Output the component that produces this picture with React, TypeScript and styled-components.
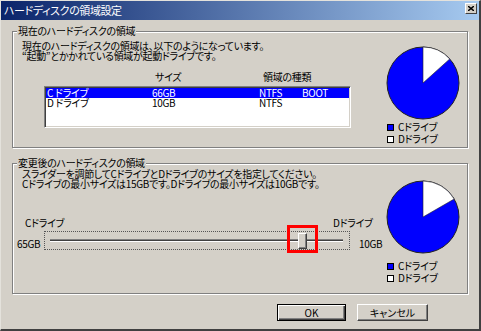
import { createGlobalStyle, styled } from 'styled-components';

const GlobalStyle = createGlobalStyle`
  html, body {
    margin: 0;
    padding: 0;
    background: #d4d0c8;
  }
  body {
    font-family: "Noto Sans CJK JP", "Noto Sans", sans-serif;
    font-size: 10px;
    font-feature-settings: "palt";
    letter-spacing: -0.3px;
    color: #000;
  }
`;

const Window = styled.div`
  width: 481px;
  height: 331px;
  box-sizing: border-box;
  background: #d4d0c8;
  border-left: 1px solid #e4e2dc;
  border-top: 1px solid #e4e2dc;
  border-right: 2px solid #404040;
  border-bottom: 2px solid #404040;
  display: flex;
  flex-direction: column;
`;

const TitleBar = styled.div`
  height: 19px;
  display: flex;
  justify-content: space-between;
  padding: 0 2px 0 3px;
  background: linear-gradient(to right, #0a246a, #a6caf0);
`;

const TitleText = styled.div`
  color: #fff;
  font-size: 11px;
  letter-spacing: -0.4px;
  line-height: 19px;
  white-space: nowrap;
`;

const CloseButton = styled.div`
  width: 12px;
  height: 11px;
  margin-top: 2px;
  box-sizing: border-box;
  background: #d4d0c8;
  border: 1px solid;
  border-color: #fff #404040 #404040 #fff;
  display: flex;
  align-items: center;
  justify-content: center;
`;

const Body = styled.div`
  flex: 1;
  padding: 11px 11px 0 11px;
  display: flex;
  flex-direction: column;
`;

const GroupBox = styled.div<{ $height: number; $gap: number }>`
  position: relative;
  box-sizing: border-box;
  height: ${(p) => p.$height}px;
  margin-top: ${(p) => p.$gap}px;
  border: 1px solid #808080;
  box-shadow: inset 1px 1px 0 #fff, 1px 1px 0 #fff;
  display: grid;
  grid-template-columns: 1fr 74px;
  padding: 0 7px 0 ${(p) => (p.$gap ? 4 : 9)}px;
`;

const GroupTitle = styled.div`
  position: absolute;
  top: -6px;
  left: 4px;
  padding: 0 1px;
  background: #d4d0c8;
  line-height: 10px;
  white-space: nowrap;
`;

const LeftColumn = styled.div`
  display: flex;
  flex-direction: column;
  min-width: 0;
`;

const RightColumn = styled.div<{ $top: number; $legendGap: number }>`
  display: flex;
  flex-direction: column;
  padding-top: ${(p) => p.$top}px;
  & > ul {
    margin-top: ${(p) => p.$legendGap}px;
  }
`;

const Message = styled.div<{ $top: number; $indent: number }>`
  margin-top: ${(p) => p.$top}px;
  margin-left: ${(p) => p.$indent}px;
  line-height: 10px;
  white-space: nowrap;
`;

const HeaderRow = styled.div`
  margin-top: 11px;
  display: grid;
  grid-template-columns: 133px 108px auto;
  line-height: 10px;
  white-space: nowrap;
`;

const ListBox = styled.div`
  margin: 4px 0 0 22px;
  width: 307px;
  height: 42px;
  box-sizing: border-box;
  background: #fff;
  border: 1px solid;
  border-color: #808080 #fff #fff #808080;
  box-shadow: inset 1px 1px 0 #404040, inset -1px -1px 0 #d4d0c8;
  padding: 1px;
`;

const ListRow = styled.div<{ $selected?: boolean }>`
  display: grid;
  grid-template-columns: 105px 107px 43px auto;
  height: 10px;
  line-height: 10px;
  padding-left: 1px;
  white-space: nowrap;
  background: ${(p) => (p.$selected ? '#0000ff' : 'transparent')};
  color: ${(p) => (p.$selected ? '#fff' : '#000')};
`;

const Legend = styled.ul`
  list-style: none;
  margin: 0;
  padding: 0 0 0 1px;
`;

const LegendItem = styled.li`
  display: flex;
  align-items: center;
  gap: 4px;
  line-height: 12px;
  white-space: nowrap;
`;

const Swatch = styled.span<{ $color: string }>`
  width: 7px;
  height: 7px;
  box-sizing: border-box;
  border: 1px solid #000;
  background: ${(p) => p.$color};
`;

const DriveLabels = styled.div`
  margin-top: 29px;
  padding-left: 8px;
  display: grid;
  grid-template-columns: 308px auto;
  line-height: 10px;
  white-space: nowrap;
`;

const SliderRow = styled.div`
  margin-top: 3px;
  display: flex;
  align-items: flex-end;
  white-space: nowrap;
`;

const SizeLabel = styled.span<{ $width?: number; $left?: number }>`
  width: ${(p) => (p.$width ? `${p.$width}px` : 'auto')};
  margin-left: ${(p) => p.$left ?? 0}px;
  margin-bottom: 1px;
  line-height: 10px;
`;

const Track = styled.div`
  position: relative;
  width: 306px;
  height: 19px;
  box-sizing: border-box;
  border: 1px dotted #555;
  display: flex;
  align-items: center;
  padding: 0 6px 0 5px;
`;

const Groove = styled.div`
  flex: 1;
  height: 1px;
  border-top: 1px solid #808080;
  border-bottom: 1px solid #fff;
  background: #404040;
`;

const Thumb = styled.div`
  position: absolute;
  top: 1px;
  width: 9px;
  height: 16px;
  box-sizing: border-box;
  background: #d4d0c8;
  border: 1px solid;
  border-color: #fff #404040 #404040 #fff;
  box-shadow: inset -1px -1px 0 #808080;
`;

const Highlight = styled.div`
  position: absolute;
  left: -12px;
  right: -12px;
  top: -9px;
  bottom: -5px;
  border: 3px solid #ff0000;
`;

const ButtonRow = styled.div`
  margin-top: 10px;
  padding-right: 40px;
  display: flex;
  justify-content: flex-end;
  gap: 11px;
`;

const Button = styled.button<{ $default?: boolean; $width: number }>`
  width: ${(p) => p.$width}px;
  height: 17px;
  padding: 0;
  font: inherit;
  font-size: 10px;
  line-height: 14px;
  color: #000;
  background: #d4d0c8;
  border: 1px solid;
  border-color: ${(p) => (p.$default ? '#000' : '#fff #404040 #404040 #fff')};
  box-shadow: ${(p) =>
    p.$default
      ? 'inset 1px 1px 0 #fff, inset -1px -1px 0 #404040, inset -2px -2px 0 #808080'
      : 'inset -1px -1px 0 #808080'};
`;

function Pie({ dAngle }: { dAngle: number }) {
  const c = 37;
  const r = 36;
  const a = (dAngle * Math.PI) / 180;
  const x = c + r * Math.sin(a);
  const y = c - r * Math.cos(a);
  return (
    <svg width="74" height="74" viewBox="0 0 74 74">
      <circle cx={c} cy={c} r={r} fill="#0000ff" stroke="#222" strokeWidth="1" />
      <path
        d={`M${c} ${c} L${c} ${c - r} A${r} ${r} 0 0 1 ${x.toFixed(2)} ${y.toFixed(2)} Z`}
        fill="#fff"
        stroke="#222"
        strokeWidth="0.6"
      />
    </svg>
  );
}

function DriveLegend() {
  return (
    <Legend>
      <LegendItem>
        <Swatch $color="#0000ff" />
        Cドライブ
      </LegendItem>
      <LegendItem>
        <Swatch $color="#fff" />
        Dドライブ
      </LegendItem>
    </Legend>
  );
}

const thumbFraction = 0.86;
const grooveLeft = 5;
const grooveWidth = 293;

export default function App() {
  return (
    <>
      <GlobalStyle />
      <Window>
        <TitleBar>
          <TitleText>ハードディスクの領域設定</TitleText>
          <CloseButton>
            <svg width="6" height="5" viewBox="0 0 6 5">
              <path d="M0 0 L6 5 M6 0 L0 5" stroke="#000" strokeWidth="1.4" />
            </svg>
          </CloseButton>
        </TitleBar>

        <Body>
          <GroupBox $height={117} $gap={0}>
            <GroupTitle>現在のハードディスクの領域</GroupTitle>
            <LeftColumn>
              <Message $top={9} $indent={0}>
                <div>現在のハードディスクの領域は、以下のようになっています。</div>
                <div>“起動”とかかれている領域が起動ドライブです。</div>
              </Message>
              <HeaderRow>
                <span />
                <span>サイズ</span>
                <span>領域の種類</span>
              </HeaderRow>
              <ListBox>
                <ListRow $selected>
                  <span>C ドライブ</span>
                  <span>66GB</span>
                  <span>NTFS</span>
                  <span>BOOT</span>
                </ListRow>
                <ListRow>
                  <span>D ドライブ</span>
                  <span>10GB</span>
                  <span>NTFS</span>
                  <span />
                </ListRow>
              </ListBox>
            </LeftColumn>
            <RightColumn $top={14} $legendGap={1}>
              <Pie dAngle={48} />
              <DriveLegend />
            </RightColumn>
          </GroupBox>

          <GroupBox $height={131} $gap={15}>
            <GroupTitle>変更後のハードディスクの領域</GroupTitle>
            <LeftColumn>
              <Message $top={5} $indent={5}>
                <div>スライダーを調節してCドライブとDドライブのサイズを指定してください。</div>
                <div>Cドライブの最小サイズは15GBです。Dドライブの最小サイズは10GBです。</div>
              </Message>
              <DriveLabels>
                <span>Cドライブ</span>
                <span>Dドライブ</span>
              </DriveLabels>
              <SliderRow>
                <SizeLabel $width={27}>65GB</SizeLabel>
                <Track>
                  <Groove />
                  <Thumb style={{ left: grooveLeft + thumbFraction * grooveWidth - 4 }}>
                    <Highlight />
                  </Thumb>
                </Track>
                <SizeLabel $left={9}>10GB</SizeLabel>
              </SliderRow>
            </LeftColumn>
            <RightColumn $top={16} $legendGap={6}>
              <Pie dAngle={60} />
              <DriveLegend />
            </RightColumn>
          </GroupBox>

          <ButtonRow>
            <Button $default $width={69}>OK</Button>
            <Button $width={71}>キャンセル</Button>
          </ButtonRow>
        </Body>
      </Window>
    </>
  );
}
